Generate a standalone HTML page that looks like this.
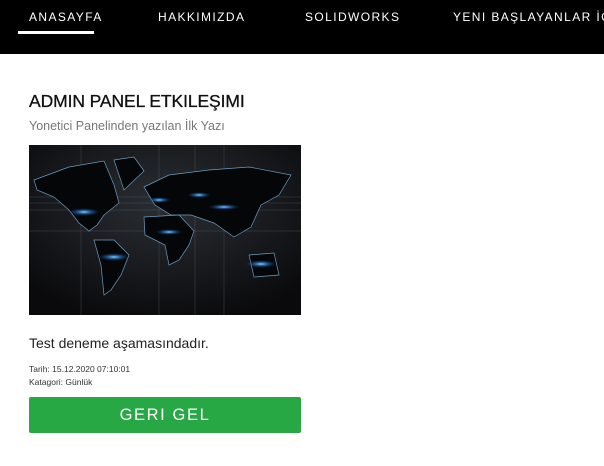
<!DOCTYPE html>
<html><head><meta charset="utf-8"><style>
*{margin:0;padding:0;box-sizing:border-box}
body{width:604px;height:466px;background:#fff;font-family:"Liberation Sans",sans-serif;overflow:hidden;position:relative}
.nav{position:absolute;left:0;top:0;width:604px;height:54px;background:#000}
.nav span{position:absolute;top:10px;color:#fff;font-size:12px;letter-spacing:1.4px;white-space:nowrap}
.ul{position:absolute;left:18px;top:31px;width:76px;height:3px;background:#fff}
h1{position:absolute;left:29px;top:91px;font-size:17.5px;font-weight:normal;color:#111;letter-spacing:-0.1px;-webkit-text-stroke:0.3px #111}
.sub{position:absolute;left:29px;top:119px;font-size:12.5px;color:#777}
.img{position:absolute;left:29px;top:145px;width:272px;height:170px}
.t{position:absolute;left:29px;top:335px;font-size:14px;color:#222}
.s{position:absolute;left:29px;font-size:8.5px;color:#333}
.btn{position:absolute;left:29px;top:397px;width:272px;height:36px;background:#28a745;border-radius:2px;color:#fff;font-size:16.5px;letter-spacing:1.6px;text-align:center;line-height:36px}
</style></head><body>
<div class="nav">
<span style="left:29px">ANASAYFA</span>
<span style="left:158px">HAKKIMIZDA</span>
<span style="left:305px">SOLIDWORKS</span>
<span style="left:453px">YENI BAŞLAYANLAR İÇ</span>
<div class="ul"></div>
</div>
<h1>ADMIN PANEL ETKILEŞIMI</h1>
<div class="sub">Yonetici Panelinden yazılan İlk Yazı</div>
<svg class="img" viewBox="0 0 272 170">
<defs>
<radialGradient id="bg" cx="0.5" cy="0.35" r="0.7"><stop offset="0" stop-color="#2a2e33"/><stop offset="1" stop-color="#0a0a0c"/></radialGradient>
<radialGradient id="g"><stop offset="0" stop-color="#8cd0ff"/><stop offset="0.4" stop-color="#2a7fd0" stop-opacity="0.7"/><stop offset="1" stop-color="#0a3060" stop-opacity="0"/></radialGradient>
</defs>
<rect width="272" height="170" fill="url(#bg)"/>
<g stroke="#5a6a78" stroke-width="0.5" opacity="0.6">
<line x1="52" y1="0" x2="52" y2="170"/><line x1="130" y1="0" x2="130" y2="170"/><line x1="166" y1="0" x2="166" y2="170"/><line x1="195" y1="0" x2="195" y2="170"/>
<line x1="0" y1="52" x2="272" y2="52"/><line x1="0" y1="58" x2="272" y2="58"/><line x1="0" y1="65" x2="272" y2="65"/><line x1="0" y1="86" x2="272" y2="86"/>
</g>
<g fill="#050608" stroke="#6a9cc0" stroke-width="0.7">
<path d="M5,35 L40,22 L75,16 L85,40 L90,58 L75,70 L68,80 L60,86 L50,78 L40,65 L25,52 L8,45Z"/>
<path d="M85,15 L105,12 L115,26 L95,45Z"/>
<path d="M65,95 L85,95 L100,110 L92,130 L82,145 L75,150 L72,120Z"/>
<path d="M115,42 L140,30 L180,25 L220,22 L262,30 L250,50 L232,60 L222,82 L205,92 L185,78 L162,70 L142,70 L126,60Z"/>
<path d="M115,72 L150,70 L165,86 L160,100 L150,115 L140,120 L136,100 L116,90Z"/>
<path d="M220,110 L245,108 L250,130 L225,132Z"/>
</g>
<g>
<ellipse cx="55" cy="67" rx="16" ry="4" fill="url(#g)"/>
<ellipse cx="130" cy="55" rx="12" ry="3" fill="url(#g)"/>
<ellipse cx="170" cy="50" rx="12" ry="3" fill="url(#g)"/>
<ellipse cx="195" cy="62" rx="16" ry="3" fill="url(#g)"/>
<ellipse cx="140" cy="87" rx="14" ry="3" fill="url(#g)"/>
<ellipse cx="85" cy="112" rx="16" ry="4" fill="url(#g)"/>
<ellipse cx="232" cy="119" rx="16" ry="4" fill="url(#g)"/>
</g>
</svg>
<div class="t">Test deneme aşamasındadır.</div>
<div class="s" style="top:364px">Tarih: 15.12.2020 07:10:01</div>
<div class="s" style="top:377px">Katagori: Günlük</div>
<div class="btn">GERI GEL</div>
</body></html>
